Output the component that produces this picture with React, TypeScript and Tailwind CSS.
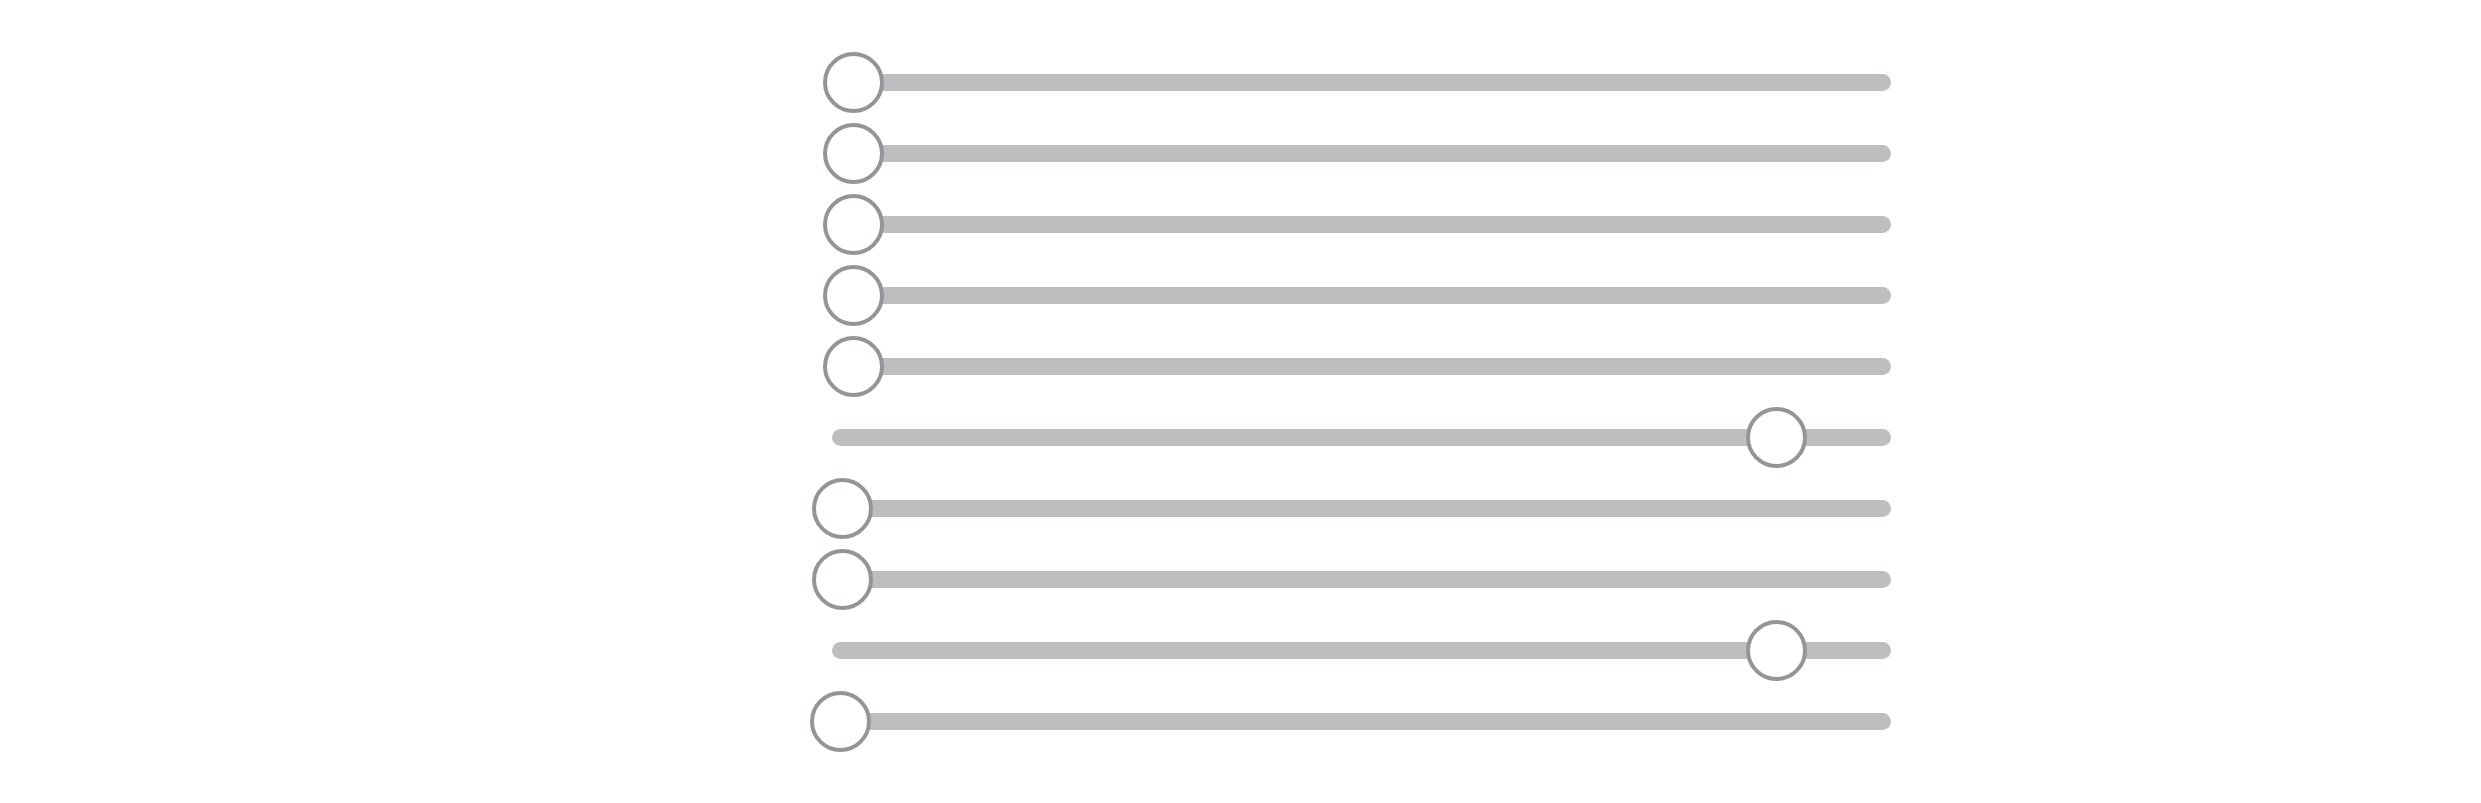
import { useState } from "react";

const initialValues = [12, 12, 12, 12, 12, 898, 2, 2, 898, 0];

type SliderProps = {
  label: string;
  value: number;
  onChange: (value: number) => void;
};

function Slider({ label, value, onChange }: SliderProps) {
  return (
    <div className="grid h-[61px] items-center">
      <div className="col-start-1 row-start-1 mx-[22px] h-[17px] rounded-full bg-[#bcbec0]" />
      <input
        type="range"
        min={0}
        max={1000}
        value={value}
        aria-label={label}
        onChange={(event) => onChange(Number(event.target.value))}
        className="col-start-1 row-start-1 m-0 h-[61px] w-full cursor-pointer appearance-none bg-transparent [&::-webkit-slider-runnable-track]:h-[61px] [&::-webkit-slider-runnable-track]:bg-transparent [&::-webkit-slider-thumb]:box-border [&::-webkit-slider-thumb]:size-[61px] [&::-webkit-slider-thumb]:appearance-none [&::-webkit-slider-thumb]:rounded-full [&::-webkit-slider-thumb]:border-4 [&::-webkit-slider-thumb]:border-solid [&::-webkit-slider-thumb]:border-[#939598] [&::-webkit-slider-thumb]:bg-white [&::-moz-range-thumb]:box-border [&::-moz-range-thumb]:size-[61px] [&::-moz-range-thumb]:rounded-full [&::-moz-range-thumb]:border-4 [&::-moz-range-thumb]:border-solid [&::-moz-range-thumb]:border-[#939598] [&::-moz-range-thumb]:bg-white"
      />
    </div>
  );
}

export default function App() {
  const [values, setValues] = useState(initialValues);

  return (
    <main className="grid min-h-screen grid-cols-[810fr_1103fr_568fr] bg-white font-['Liberation_Sans',sans-serif]">
      <div className="col-start-2 flex flex-col gap-[10px] pt-[52px] pb-12">
        {values.map((value, index) => (
          <Slider
            key={index}
            label={`Slider ${index + 1}`}
            value={value}
            onChange={(next) =>
              setValues((current) => current.map((v, i) => (i === index ? next : v)))
            }
          />
        ))}
      </div>
    </main>
  );
}
